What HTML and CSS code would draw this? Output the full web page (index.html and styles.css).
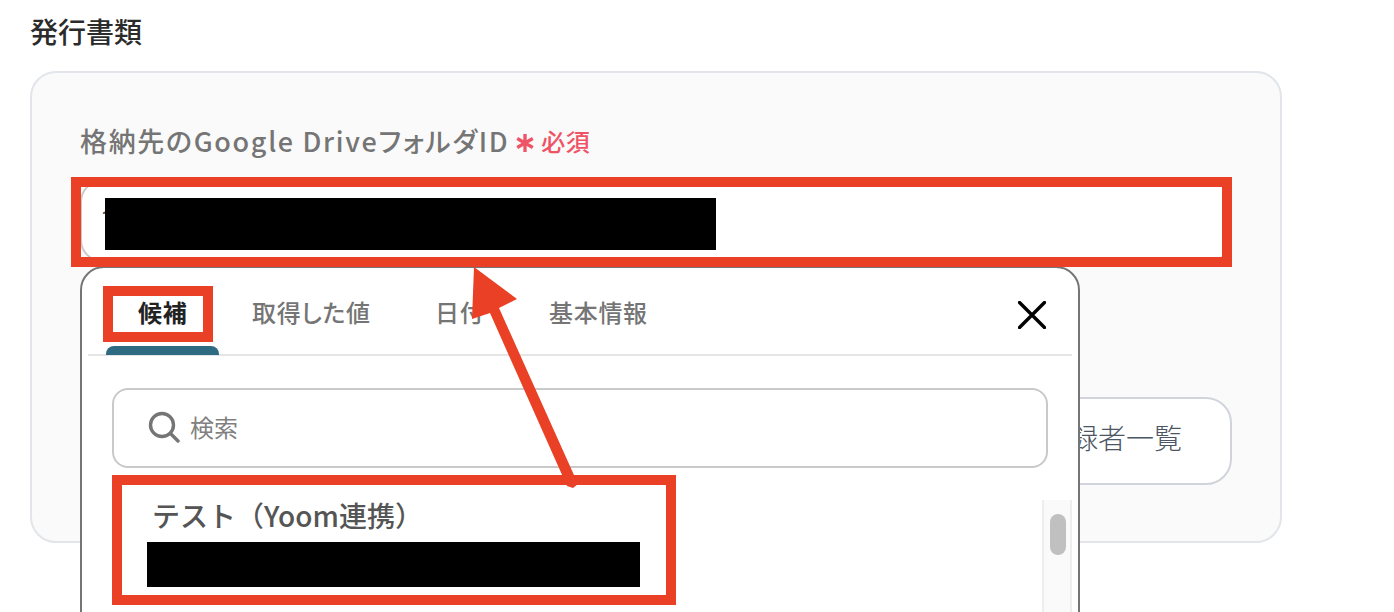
FILE: index.html
```html
<!DOCTYPE html>
<html lang="ja">
<head>
<meta charset="utf-8">
<title>発行書類</title>
<link rel="stylesheet" href="styles.css">
</head>
<body>
<main class="page">
  <h2 class="section-title">発行書類</h2>
  <section class="card">
    <div class="field-label">
      <span>格納先のGoogle DriveフォルダID</span>
      <span class="required">
        <svg class="star" viewBox="0 0 18 18" aria-hidden="true"><path d="M9 1V17M2 5 16 13M16 5 2 13"/></svg>
        <span>必須</span>
      </span>
    </div>
    <div class="text-input">1</div>
    <div class="button-row"><button class="outline-button">登録者一覧</button></div>
  </section>

  <div class="popup">
    <div class="tabs">
      <span class="tab tab-active">候補</span>
      <span class="tab tab-second">取得した値</span>
      <span class="tab tab-third">日付</span>
      <span class="tab tab-fourth">基本情報</span>
      <svg class="close" viewBox="0 0 28 28" aria-hidden="true"><path d="M1.5 1.5 26.5 26.5M26.5 1.5 1.5 26.5"/></svg>
    </div>
    <div class="popup-body">
      <div class="search">
        <svg class="search-icon" viewBox="0 0 32 32" aria-hidden="true"><circle cx="14" cy="14" r="11.5"/><path d="M22.5 22.5 30 30"/></svg>
        <span>検索</span>
      </div>
      <div class="list">
        <div class="option">
          <div class="option-title">テスト（Yoom連携）</div>
          <div class="redact redact-option"></div>
        </div>
        <div class="scrollbar"><div class="thumb"></div></div>
      </div>
    </div>
  </div>

  <div class="redact redact-input"></div>
  <div class="mark mark-input"></div>
  <div class="mark mark-tab"></div>
  <div class="mark mark-option"></div>
  <svg class="arrow" viewBox="0 0 1394 612" aria-hidden="true">
    <polygon points="474,267 517,299 499,308 578,484 573,488 567,486 490,313 472,319"/>
  </svg>
</main>
</body>
</html>
```
FILE: styles.css
```css
* { box-sizing: border-box; }
html, body { margin: 0; height: 612px; overflow: hidden; background: #fff; }
body { font-family: "Noto Sans CJK JP", "Noto Sans", sans-serif; }
.page { position: relative; width: 1394px; height: 612px; overflow: hidden; padding: 11px 112px 0 30px; }
.section-title { margin: 0 0 19px; font-size: 28px; line-height: 41px; font-weight: 500; color: #2b2b2b; }
.card { height: 472px; border: 2px solid #e2e5e9; border-radius: 26px; background: #fafafa; padding: 48px 48px 0; }
.field-label { display: flex; align-items: center; height: 42px; padding-bottom: 4px; font-size: 27px; font-weight: 500; color: #757575; letter-spacing: 1.67px; font-feature-settings: "palt"; white-space: nowrap; }
.required { display: flex; align-items: center; margin-left: 6px; color: #ef5366; font-size: 24px; letter-spacing: 0.5px; font-feature-settings: normal; }
.star { width: 20px; height: 20px; margin: 6px 6px 0 0; fill: none; stroke: #ef5366; stroke-width: 3; }
.text-input { height: 82px; margin-top: 17px; padding: 22px 0 0 19px; background: #fff; border: 2px solid #c9c9c9; border-radius: 22px; font: 400 24px/30px Roboto, sans-serif; color: #555; }
.button-row { display: flex; justify-content: flex-end; margin-top: 135px; }
.outline-button { width: 400px; height: 88px; border: 2px solid #d1d5db; border-radius: 26px; background: #fff; font: 300 28px/1 "Noto Sans CJK JP", sans-serif; color: #4b5563; text-align: right; padding: 0 48px 8px 0; }

.popup { position: absolute; left: 80px; top: 266px; width: 1000px; height: 420px; background: #fff; border: 2px solid #757575; border-radius: 24px; }
.tabs { position: relative; height: 88px; margin: 0 6px; border-bottom: 2px solid #e5e5e5; }
.tab { position: absolute; top: 26px; font-size: 24px; line-height: 36px; font-weight: 500; color: #757575; letter-spacing: 0.7px; white-space: nowrap; font-feature-settings: "palt"; }
.tab-active { left: 50px; color: #222; font-weight: 700; }
.tab-active::after { content: ""; position: absolute; left: -32px; top: 52px; width: 113px; height: 9px; background: #2e6a82; border-radius: 8px 8px 0 0; }
.tab-second { left: 164px; }
.tab-third { left: 347px; }
.tab-fourth { left: 461px; }
.close { position: absolute; left: 930px; top: 33px; width: 28px; height: 28px; fill: none; stroke: #000; stroke-width: 3.4; stroke-linecap: round; }
.popup-body { padding: 32px 30px 0; }
.search { display: flex; align-items: center; gap: 10px; height: 80px; border: 2px solid #c9c9c9; border-radius: 16px; padding: 0 0 3px 34px; font-size: 24px; color: #808080; background: #fff; }
.search-icon { width: 32px; height: 32px; fill: none; stroke: #757575; stroke-width: 3.4; stroke-linecap: round; }
.list { position: relative; margin-top: 32px; }
.option { padding: 0 0 0 40px; }
.option-title { font-size: 28px; line-height: 30px; font-weight: 500; color: #555; }
.scrollbar { position: absolute; left: 930px; top: 0; width: 30px; height: 200px; background: #fafafa; border: solid #eee; border-width: 0 2px; }
.thumb { width: 16px; height: 41px; margin: 14px 0 0 6px; background: #c0c0c0; border-radius: 8px; }

.redact { background: #000; }
.redact-input { position: absolute; left: 105px; top: 198px; width: 611px; height: 52px; }
.redact-option { position: absolute; left: 35px; top: 42px; width: 493px; height: 45px; }
.mark { position: absolute; border: 10px solid #ea4025; }
.mark-input { left: 71px; top: 177px; width: 1161px; height: 90px; }
.mark-tab { left: 103px; top: 286px; width: 110px; height: 56px; }
.mark-option { left: 112px; top: 475px; width: 564px; height: 130px; }
.arrow { position: absolute; left: 0; top: 0; width: 1394px; height: 612px; fill: #ea4025; }
```
